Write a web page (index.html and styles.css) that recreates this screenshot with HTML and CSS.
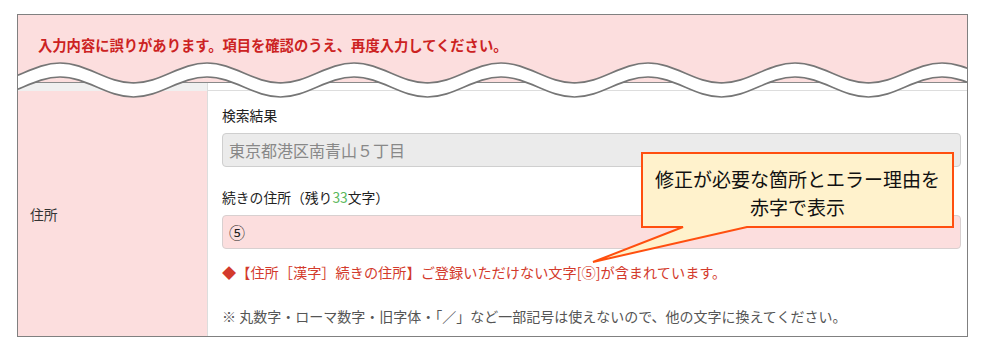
FILE: index.html
```html
<!DOCTYPE html>
<html lang="ja">
<head>
  <meta charset="UTF-8" />
  <meta name="viewport" content="width=device-width, initial-scale=1" />
  <title>入力エラー表示</title>
  <link rel="stylesheet" href="styles.css">
</head>
<body>
  <div class="frame">
    <div class="alert">入力内容に誤りがあります。項目を確認のうえ、再度入力してください。</div>

    <div class="row row-stub">
      <div class="cell-label"></div>
      <div class="cell-body"></div>
    </div>

    <div class="row">
      <div class="cell-label">住所</div>
      <div class="cell-body">
        <div class="field-label">検索結果</div>
        <div class="input input-readonly">東京都港区南青山５丁目</div>
        <div class="field-label">続きの住所（残り<span class="count">33</span>文字）</div>
        <div class="input input-error">⑤</div>
        <p class="error-msg">◆【住所［漢字］続きの住所】ご登録いただけない文字[⑤]が含まれています。</p>
        <p class="note">※ 丸数字・ローマ数字・旧字体・「／」など一部記号は使えないので、他の文字に換えてください。</p>
      </div>
    </div>

    <!-- 省略を示す波線 -->
    <svg class="wave" width="960" height="100" viewBox="0 0 960 100">
      <defs>
        <path id="waveLine" d="M-105,48 C-78.2,48 -58.3,68 -31.5,68 S15.2,48 42,48 S88.7,68 115.5,68 S162.2,48 189,48 S235.7,68 262.5,68 S309.2,48 336,48 S382.7,68 409.5,68 S456.2,48 483,48 S529.7,68 556.5,68 S603.2,48 630,48 S676.7,68 703.5,68 S750.2,48 777,48 S823.7,68 850.5,68 S897.2,48 924,48 S970.7,68 997.5,68" fill="none" />
      </defs>
      <use href="#waveLine" transform="translate(0,7)" stroke="#fff" stroke-width="13.5" />
      <use href="#waveLine" stroke="#767676" stroke-width="1.6" />
      <use href="#waveLine" transform="translate(0,14)" stroke="#767676" stroke-width="1.6" />
    </svg>

    <!-- 吹き出し -->
    <svg class="callout-shape" width="950" height="330" viewBox="0 0 950 330">
      <path d="M624,138 H935 V212 H729 L575,247 L665,212 H624 Z" fill="#fff2cc" stroke="#ff4f0f" stroke-width="2" stroke-linejoin="miter" />
    </svg>
    <div class="callout-text">修正が必要な箇所とエラー理由を<br>赤字で表示</div>
  </div>
</body>
</html>
```

FILE: styles.css
```css
* { box-sizing: border-box; }
body {
  margin: 0;
  background-color: #fff;
  font-family: "Noto Sans CJK JP", "Noto Sans", sans-serif;
  color: #333;
}
.frame {
  position: relative;
  width: 951px;
  height: 323px;
  margin: 14px 0 0 17px;
  border: 1px solid #808080;
  overflow: hidden;
  background-color: #fff;
}
.alert {
  height: 68px;
  padding: 20px 20px 0;
  background-color: #fcdede;
  border-bottom: 1px solid #8a8a8a;
  color: #cc2222;
  font-size: 14.3px;
  font-weight: bold;
  line-height: 20px;
}
.row {
  display: grid;
  grid-template-columns: 190px 1fr;
  border-bottom: 1px solid #ddd;
}
.row-stub { height: 8px; }
.row-stub .cell-label { background-color: #f0f0f0; }
.cell-label {
  display: flex;
  align-items: center;
  padding-left: 12px;
  background-color: #fcdede;
  border-right: 1px solid #ddd;
  font-size: 13.8px;
}
.cell-body {
  padding: 14px 6px 10px 14px;
}
.field-label {
  font-size: 13.8px;
  line-height: 20px;
  color: #222;
}
.count { color: #5cb85c; }
.input {
  height: 34px;
  margin: 8px 0 20px;
  padding: 0 6px;
  border: 1px solid #cfcfcf;
  border-radius: 4px;
  font-size: 16px;
  line-height: 32px;
}
.input-readonly {
  background-color: #ebebeb;
  color: #888;
}
.input-error {
  margin-bottom: 0;
  background-color: #fcdede;
  border-color: #d8d0d0;
  color: #222;
}
.error-msg {
  margin: 13px 0 0;
  font-size: 14.2px;
  line-height: 20px;
  color: #d33a2c;
}
.note {
  margin: 24px 0 0;
  font-size: 14px;
  line-height: 20px;
  color: #555;
}
.wave,
.callout-shape {
  position: absolute;
  left: 0;
  top: 0;
  pointer-events: none;
}
.callout-text {
  position: absolute;
  left: 624px;
  top: 138px;
  width: 311px;
  height: 74px;
  padding-top: 12px;
  text-align: center;
  font-size: 19px;
  line-height: 28px;
  color: #111;
}
```
